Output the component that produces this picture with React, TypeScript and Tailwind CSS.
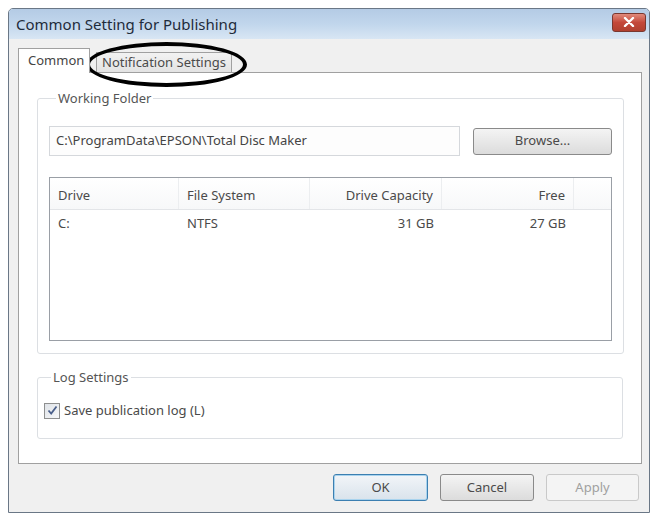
import React from 'react';

type Column = { label: string; width: number; align: 'left' | 'right' };

const COLUMNS: Column[] = [
  { label: 'Drive', width: 129, align: 'left' },
  { label: 'File System', width: 131, align: 'left' },
  { label: 'Drive Capacity', width: 132, align: 'right' },
  { label: 'Free', width: 132, align: 'right' },
];

const ROWS = [['C:', 'NTFS', '31 GB', '27 GB']];

function GroupBox({ title, className, children }: { title: string; className?: string; children: React.ReactNode }) {
  return (
    <fieldset className={`border border-[#dcdfe3] rounded-[3px] ${className ?? ''}`}>
      <legend className="ml-[7px] px-[2px] text-[13px] text-[#555] leading-none">{title}</legend>
      {children}
    </fieldset>
  );
}

function DialogButton({ label, primary, disabled }: { label: string; primary?: boolean; disabled?: boolean }) {
  return (
    <div
      className={`flex items-center justify-center h-[27px] rounded-[3px] border text-[13px] ${
        primary
          ? 'border-[#3c7fb1] bg-gradient-to-b from-[#f2f5f8] to-[#d9e3ec] shadow-[inset_0_0_0_1px_#a8d3ee] text-[#4a4a4a]'
          : disabled
          ? 'border-[#c9c9c9] bg-[#f4f4f4] text-[#a0a0a0]'
          : 'border-[#8a8a8a] bg-gradient-to-b from-[#f4f4f4] to-[#dcdcdc] text-[#4a4a4a]'
      }`}
    >
      {label}
    </div>
  );
}

export default function App() {
  return (
    <div className="w-[654px] h-[515px] bg-white relative" style={{ fontFamily: '"Noto Sans", "Open Sans", sans-serif' }}>
      <div className="absolute left-[8px] top-[8px] w-[642px] h-[505px] border border-[#6a7786] rounded-t-[5px] flex flex-col overflow-hidden">
        {/* title bar */}
        <div className="h-[30px] shrink-0 flex items-center justify-between pl-[7px] pr-[3px] bg-gradient-to-b from-[#b4cbe5] via-[#c1d6ec] to-[#d8e6f4]">
          <span className="text-[15px] text-[#1e2b3a] leading-none">Common Setting for Publishing</span>
          <div className="w-[34px] h-[19px] rounded-[3px] border border-[#7a3830] bg-gradient-to-b from-[#e08a7c] via-[#c4483a] to-[#b0402f] flex items-center justify-center mt-[-4px]">
            <svg width="12" height="10" viewBox="0 0 12 10">
              <path d="M2 1 L10 9 M10 1 L2 9" stroke="#fff" strokeWidth="2.4" strokeLinecap="round" />
            </svg>
          </div>
        </div>

        {/* client */}
        <div className="flex-1 bg-[#f0f0f0] flex flex-col">
          {/* tabs */}
          <div className="h-[33px] flex items-end pl-[9px]">
            <div className="h-[25px] w-[72px] bg-white border border-[#a0a0a0] border-b-0 flex items-center pl-[9px] text-[13px] text-[#444] relative z-10 mb-[-1px]">
              Common
            </div>
            <div className="h-[20px] w-[136px] ml-[6px] bg-gradient-to-b from-[#f2f2f2] to-[#e3e3e3] border border-[#a0a0a0] border-b-0 flex items-center justify-center text-[13px] text-[#4a4a4a]">
              Notification Settings
            </div>
          </div>

          {/* tab panel */}
          <div className="ml-[9px] mr-[7px] h-[392px] bg-white border border-[#a0a0a0] flex flex-col px-[18px]">
            <GroupBox title="Working Folder" className="mt-[19px] h-[262px] px-[11px]">
              <div className="flex items-center gap-[13px] mt-[21px]">
                <div className="w-[411px] h-[30px] border border-[#d5d8dc] bg-[#fdfdfd] flex items-center pl-[6px] text-[13px] text-[#444]">
                  C:\ProgramData\EPSON\Total Disc Maker
                </div>
                <div className="w-[139px]">
                  <DialogButton label="Browse..." />
                </div>
              </div>

              <div className="mt-[21px] w-[563px] h-[164px] border border-[#9a9fa6] bg-white flex flex-col">
                <div className="h-[32px] flex border-b border-[#e3e5e8] bg-gradient-to-b from-white to-[#f7f8f9] text-[13px] text-[#4a4a4a]">
                  {COLUMNS.map((c) => (
                    <div
                      key={c.label}
                      className={`flex items-center pt-[4px] border-r border-[#eceef0] ${c.align === 'right' ? 'justify-end pr-[8px]' : 'pl-[8px]'}`}
                      style={{ width: c.width }}
                    >
                      {c.label}
                    </div>
                  ))}
                  <div className="flex-1" />
                </div>
                {ROWS.map((r, i) => (
                  <div key={i} className="h-[27px] flex text-[13px] text-[#4a4a4a]">
                    {r.map((v, j) => (
                      <div
                        key={j}
                        className={`flex items-center ${COLUMNS[j].align === 'right' ? 'justify-end pr-[8px]' : 'pl-[8px]'}`}
                        style={{ width: COLUMNS[j].width }}
                      >
                        {v}
                      </div>
                    ))}
                  </div>
                ))}
              </div>
            </GroupBox>

            <GroupBox title="Log Settings" className="mt-[17px] h-[68px] px-[6px]">
              <div className="flex items-center gap-[4px] mt-[17px]">
                <div className="w-[16px] h-[16px] border border-[#8e8f8f] bg-gradient-to-br from-[#dfe3e8] to-[#f6f7f8] flex items-center justify-center">
                  <svg width="11" height="11" viewBox="0 0 11 11">
                    <path d="M1.5 5.5 L4.2 8.5 L9.5 1.5" fill="none" stroke="#4a5f8a" strokeWidth="1.8" />
                  </svg>
                </div>
                <span className="text-[13px] text-[#4a4a4a]">Save publication log (L)</span>
              </div>
            </GroupBox>
          </div>

          {/* buttons */}
          <div className="flex justify-end gap-[12px] mr-[10px] mt-[10px]">
            <div className="w-[95px]">
              <DialogButton label="OK" primary />
            </div>
            <div className="w-[94px]">
              <DialogButton label="Cancel" />
            </div>
            <div className="w-[93px]">
              <DialogButton label="Apply" disabled />
            </div>
          </div>
        </div>
      </div>

      {/* hand-drawn annotation around the second tab */}
      <div className="absolute left-[86px] top-[42px] w-[161px] h-[45px] rounded-[50%] border-[4px] border-black" />
    </div>
  );
}
